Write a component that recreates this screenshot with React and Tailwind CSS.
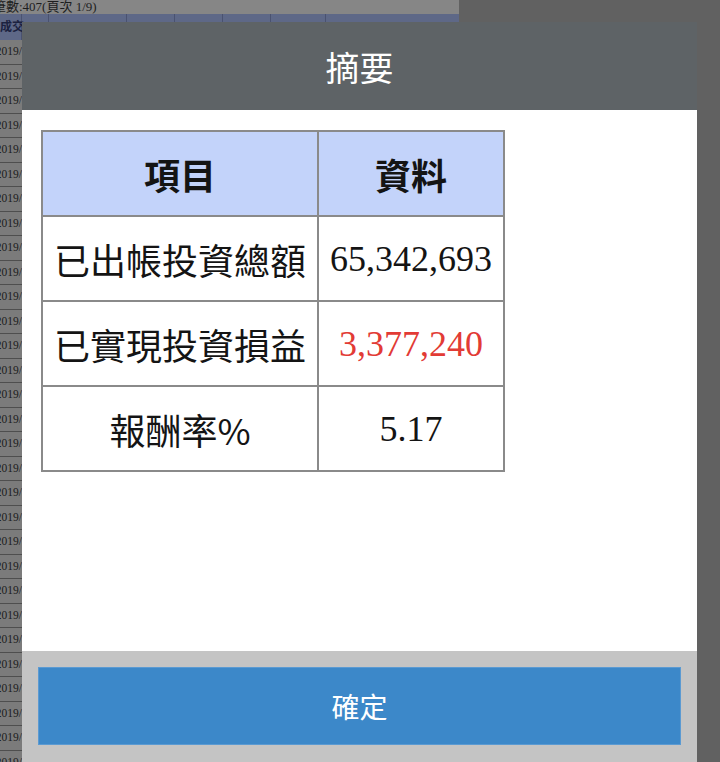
import React from "react";

const rows = [
  { label: "已出帳投資總額", value: "65,342,693", red: false },
  { label: "已實現投資損益", value: "3,377,240", red: true },
  { label: "報酬率%", value: "5.17", red: false },
];

const bgRows = Array.from({ length: 30 });

const cjk = { fontFamily: '"Noto Sans CJK TC", "Noto Sans", sans-serif' };
const serif = { fontFamily: '"Liberation Serif", "Noto Sans CJK TC", serif' };

export default function App() {
  return (
    <div className="relative h-[762px] w-[720px] overflow-hidden bg-[#616161]">
      {/* dimmed page behind the dialog */}
      <div className="flex w-[459px] flex-col" style={serif}>
        <div className="h-[14px] overflow-hidden whitespace-nowrap bg-[#868686] text-[13px] leading-[14px] text-[#1e1e1e]">
          <span className="-ml-[7px]">筆數:407(頁次 1/9)</span>
        </div>
        <div className="flex h-[26px] bg-[#5e6887]">
          <div className="flex w-[22px] items-center border-r border-[#4a5270] text-[12px] font-bold text-[#1c2240]">
            <span className="whitespace-nowrap">成交</span>
          </div>
          <div className="w-[27px] border-r border-[#4a5270]" />
          <div className="w-[78px] border-r border-[#4a5270]" />
          <div className="w-[48px] border-r border-[#4a5270]" />
          <div className="w-[48px] border-r border-[#4a5270]" />
          <div className="w-[48px] border-r border-[#4a5270]" />
          <div className="w-[55px] border-r border-[#4a5270]" />
          <div className="flex-1" />
        </div>
        {bgRows.map((_, i) => (
          <div
            key={i}
            className="flex h-[24.5px] w-[22px] items-center justify-end overflow-hidden whitespace-nowrap border-b border-[#4e4e4e] bg-[#7b7b7b] text-[11.5px] text-[#1c1c1c]"
          >
            <span className="shrink-0">2019/</span>
          </div>
        ))}
      </div>

      {/* dialog */}
      <div className="absolute left-[22px] top-[22px] flex h-[740px] w-[675px] flex-col bg-white" style={cjk}>
        <div className="flex h-[88px] shrink-0 items-center justify-center bg-[#5e6366] text-[34px] text-white">
          摘要
        </div>
        <div className="flex-1 px-[19px] pt-[20px]">
          <table className="border-collapse border-2 border-[#7c7c7c]">
            <thead>
              <tr className="bg-[#c3d3fa]">
                <th className="h-[85px] w-[276px] border-2 border-[#8a8a8a] text-[36px] font-bold text-[#141414]">項目</th>
                <th className="h-[85px] w-[186px] border-2 border-[#8a8a8a] text-[36px] font-bold text-[#141414]">資料</th>
              </tr>
            </thead>
            <tbody>
              {rows.map((row) => (
                <tr key={row.label}>
                  <td className="h-[85px] border-2 border-[#8a8a8a] text-center text-[36px] text-[#141414]">{row.label}</td>
                  <td
                    className={`h-[85px] border-2 border-[#8a8a8a] text-center text-[36px] ${row.red ? "text-[#e23b35]" : "text-[#141414]"}`}
                    style={serif}
                  >
                    {row.value}
                  </td>
                </tr>
              ))}
            </tbody>
          </table>
        </div>
        <div className="shrink-0 bg-[#c4c4c4] px-[16px] pb-[17px] pt-[16px]">
          <button
            type="button"
            className="flex h-[78px] w-full items-center justify-center border border-[#5b9ad2] bg-[#3c88c9] text-[28px] text-white"
          >
            確定
          </button>
        </div>
      </div>
    </div>
  );
}
